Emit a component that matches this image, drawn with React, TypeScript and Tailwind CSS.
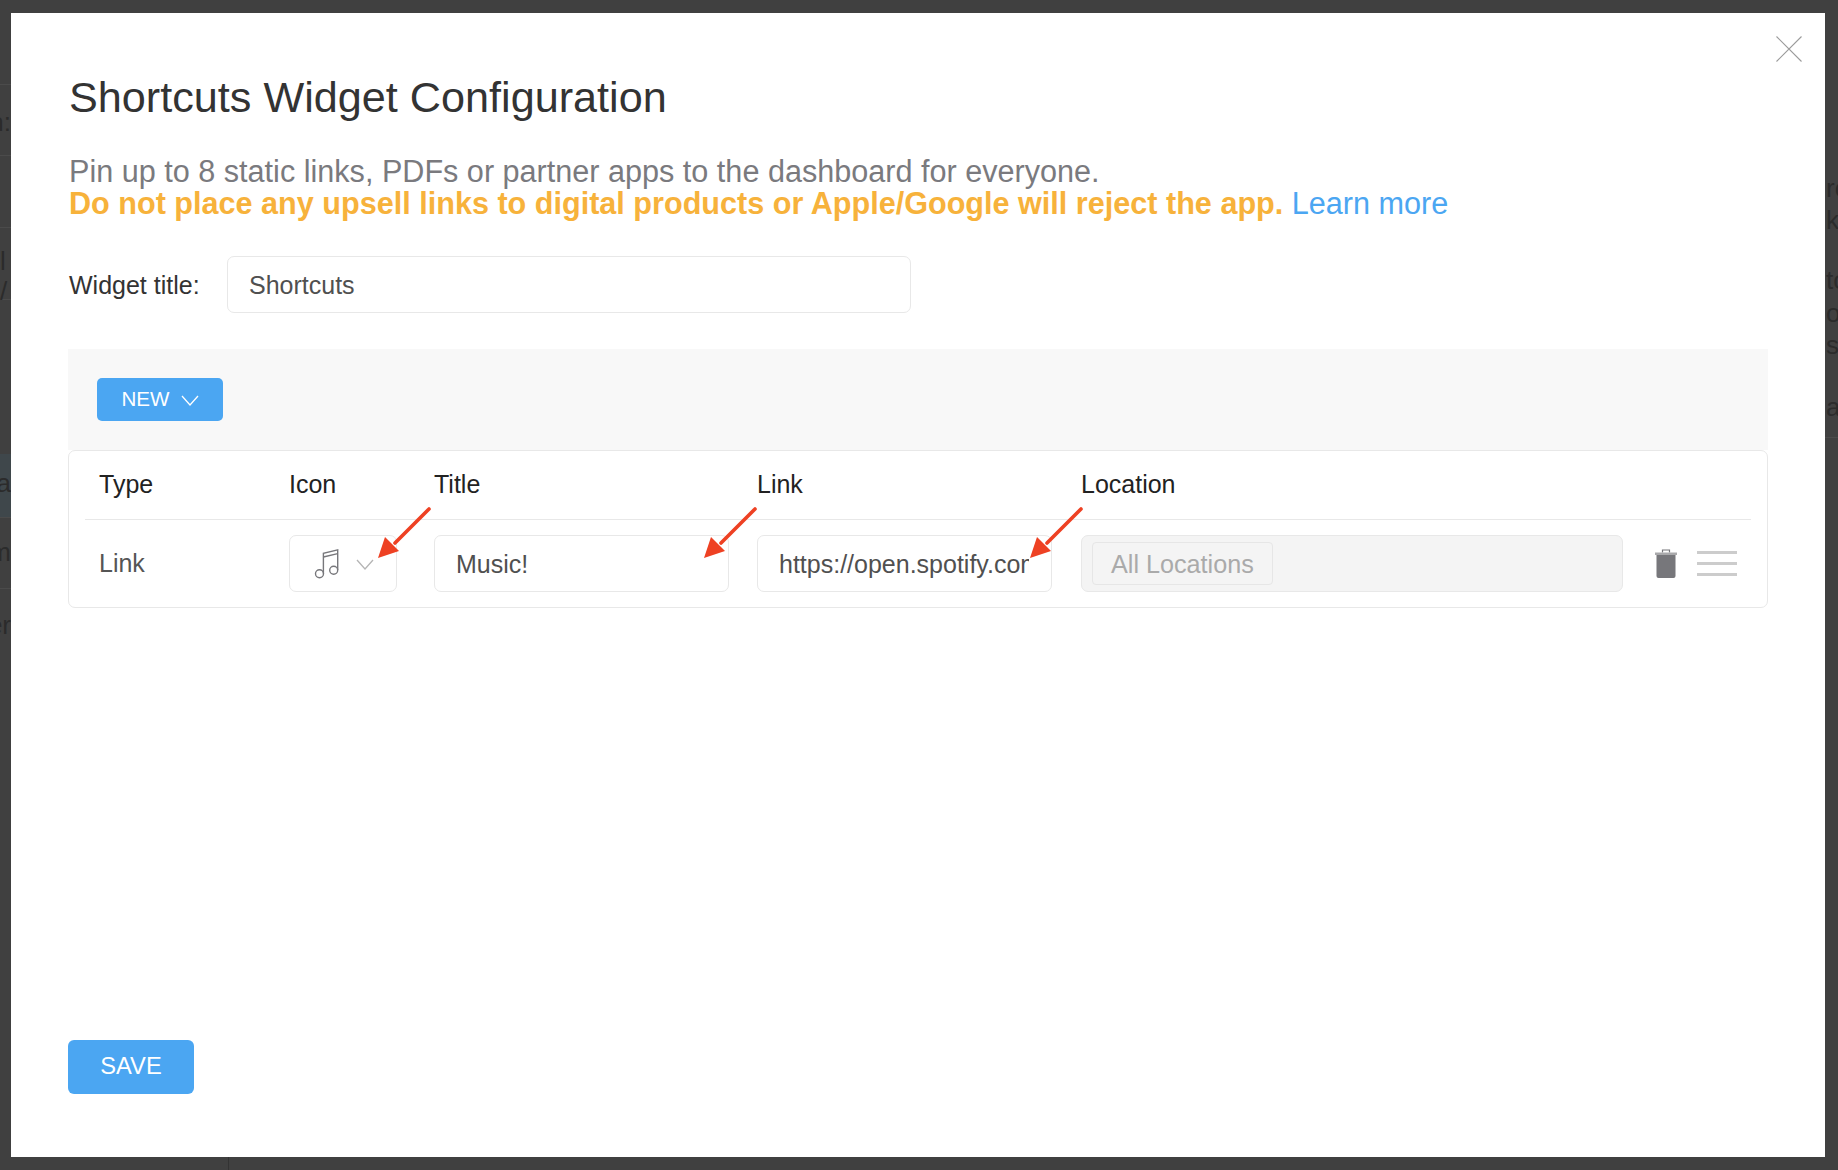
const inputClass =
  "h-[57px] rounded-[7px] border border-[#e8e8e8] bg-white pl-[21px] pr-[22px] pt-[2px] text-[25px] text-[#505050] outline-none";

// Arrow drawn on top of the table row, tip points down-left
function RedArrow({ className }: { className: string }) {
  return (
    <svg className={`absolute ${className}`} width="54" height="52" viewBox="0 0 54 52">
      <path d="M52 2 L18 36" stroke="#ee4123" strokeWidth="3.6" strokeLinecap="round" />
      <path d="M1 51 L8 30 L22 44 Z" fill="#ee4123" />
    </svg>
  );
}

function Chevron({ className }: { className: string }) {
  return (
    <svg className={className} width="18" height="11" viewBox="0 0 18 11" fill="none" stroke="currentColor" strokeWidth="1.3">
      <path d="M1 1 L9 10 L17 1" />
    </svg>
  );
}

function MusicIcon() {
  return (
    <svg width="30" height="32" viewBox="0 0 30 32" fill="none" stroke="#77777b" strokeWidth="1.4">
      <circle cx="7.5" cy="25.7" r="4" />
      <circle cx="21.7" cy="22.3" r="4" />
      <path d="M11.4 25.5 V5.2 L25.7 1.8 V22" />
      <path d="M11.4 9 L25.7 5.6" />
    </svg>
  );
}

function TrashIcon() {
  return (
    <svg width="22" height="29" viewBox="0 0 22 29">
      <path d="M7.5 3.5 V1 H14.5 V3.5" fill="none" stroke="#77777b" strokeWidth="1.2" />
      <rect x="0" y="3.5" width="22" height="2.5" fill="#a9a9ab" />
      <path d="M1.5 6 H20.5 V27 Q20.5 29 18.5 29 H3.5 Q1.5 29 1.5 27 Z" fill="#77777b" />
    </svg>
  );
}

// The page behind the modal only peeks out on both edges
function BackdropPage() {
  const leftLines = ["top-[84px]", "top-[155px]", "top-[227px]", "top-[299px]", "top-[517px]", "top-[588px]"];
  return (
    <div className="absolute inset-0 overflow-hidden text-[26px] leading-[30px] text-[#2b2b2b]">
      {leftLines.map((top) => (
        <div key={top} className={`absolute left-0 h-px w-[11px] bg-[#4b4b4b] ${top}`} />
      ))}
      <div className="absolute left-0 top-[454px] h-[63px] w-[11px] bg-[#3f474b]" />
      <span className="absolute right-[1827px] top-[107px]">n:</span>
      <span className="absolute right-[1827px] top-[246px]">l /</span>
      <span className="absolute right-[1827px] top-[468px]">La</span>
      <span className="absolute right-[1827px] top-[537px]">m</span>
      <span className="absolute right-[1827px] top-[610px]">er</span>
      <span className="absolute left-[1826px] top-[173px]">ro</span>
      <span className="absolute left-[1826px] top-[205px]">ks</span>
      <span className="absolute left-[1826px] top-[265px]">to</span>
      <span className="absolute left-[1826px] top-[298px]">o</span>
      <span className="absolute left-[1826px] top-[330px]">st</span>
      <span className="absolute left-[1826px] top-[392px]">a</span>
      <div className="absolute left-[1825px] top-[437px] h-px w-[13px] bg-[#4b4b4b]" />
      <div className="absolute left-[228px] top-[1157px] h-[13px] w-px bg-[#333]" />
    </div>
  );
}

export default function App() {
  return (
    <div className="relative h-[1170px] w-[1838px] overflow-hidden bg-[#404040] font-['Liberation_Sans',Arial,sans-serif]">
      <BackdropPage />

      <div className="relative ml-[11px] mt-[13px] inline-flex h-[1144px] w-[1814px] flex-col bg-white pl-[58px] pr-[56px]">
        <button className="absolute right-[23px] top-[23px] text-[#9b9b9b]">
          <svg width="26" height="26" viewBox="0 0 26 26" fill="none" stroke="currentColor" strokeWidth="1.1">
            <path d="M0.5 0.5 L25.5 25.5 M25.5 0.5 L0.5 25.5" />
          </svg>
        </button>

        <h1 className="mt-[59px] text-[43.2px] leading-[50px] text-[#333]">Shortcuts Widget Configuration</h1>

        <p className="mt-[33px] text-[30.6px] leading-[32px] text-[#7a7a7e]">
          Pin up to 8 static links, PDFs or partner apps to the dashboard for everyone.
          <br />
          <span className="font-bold text-[#f7b23b]">
            Do not place any upsell links to digital products or Apple/Google will reject the app.
          </span>{" "}
          <a className="text-[#4ba6f2]">Learn more</a>
        </p>

        <div className="mt-[37px] flex items-center">
          <label className="w-[158px] pt-[2px] text-[25px] text-[#333]">Widget title:</label>
          <input readOnly value="Shortcuts" className={`${inputClass} w-[684px]`} />
        </div>

        <div className="-ml-px mt-[36px] h-[101px] w-[1700px] bg-[#f8f8f8] pl-[29px] pt-[29px]">
          <button className="flex h-[43px] w-[126px] items-center justify-center gap-[11px] rounded-[5px] bg-[#4ba6f2] text-[20.6px] text-white">
            NEW
            <Chevron className="mt-[2px]" />
          </button>
        </div>

        <div className="relative -ml-px h-[158px] w-[1700px] rounded-[7px] border border-[#e8e8e8] px-[16px]">
          <div className="grid h-[69px] w-[1666px] grid-cols-[204px_145px_323px_324px_542px_128px] items-center border-b border-[#e8e8e8] text-[25px] text-[#222]">
            <span className="pl-[14px]">Type</span>
            <span>Icon</span>
            <span>Title</span>
            <span>Link</span>
            <span>Location</span>
          </div>

          <div className="grid w-[1666px] grid-cols-[204px_145px_323px_324px_542px_128px] items-center pt-[15px]">
            <span className="pl-[14px] text-[25px] text-[#555]">Link</span>

            <div className="flex h-[57px] w-[108px] items-center rounded-[7px] border border-[#e8e8e8] pl-[22px]">
              <MusicIcon />
              <Chevron className="ml-[14px] mt-[1px] text-[#b5b5b5]" />
            </div>

            <input readOnly value="Music!" className={`${inputClass} w-[295px]`} />
            <input readOnly value="https://open.spotify.com/playlist" className={`${inputClass} w-[295px]`} />

            <div className="flex h-[57px] w-[542px] items-center rounded-[7px] border border-[#e8e8e8] bg-[#f4f4f4] pl-[10px]">
              <span className="flex h-[43px] items-center rounded-[4px] border border-[#e6e6e6] px-[18px] pt-[2px] text-[25.2px] text-[#aaa]">
                All Locations
              </span>
            </div>

            <div className="flex items-center gap-[20px] pl-[32px]">
              <TrashIcon />
              <div className="flex w-[40px] flex-col gap-[7.5px]">
                <div className="h-[3.5px] bg-[#ccc]" />
                <div className="h-[3.5px] bg-[#ccc]" />
                <div className="h-[3.5px] bg-[#ccc]" />
              </div>
            </div>
          </div>

          <RedArrow className="left-[308px] top-[56px]" />
          <RedArrow className="left-[634px] top-[56px]" />
          <RedArrow className="left-[960px] top-[56px]" />
        </div>

        <button className="-ml-px mt-auto mb-[63px] h-[54px] w-[126px] rounded-[6px] bg-[#4ba6f2] text-[23.7px] text-white">
          SAVE
        </button>
      </div>
    </div>
  );
}
